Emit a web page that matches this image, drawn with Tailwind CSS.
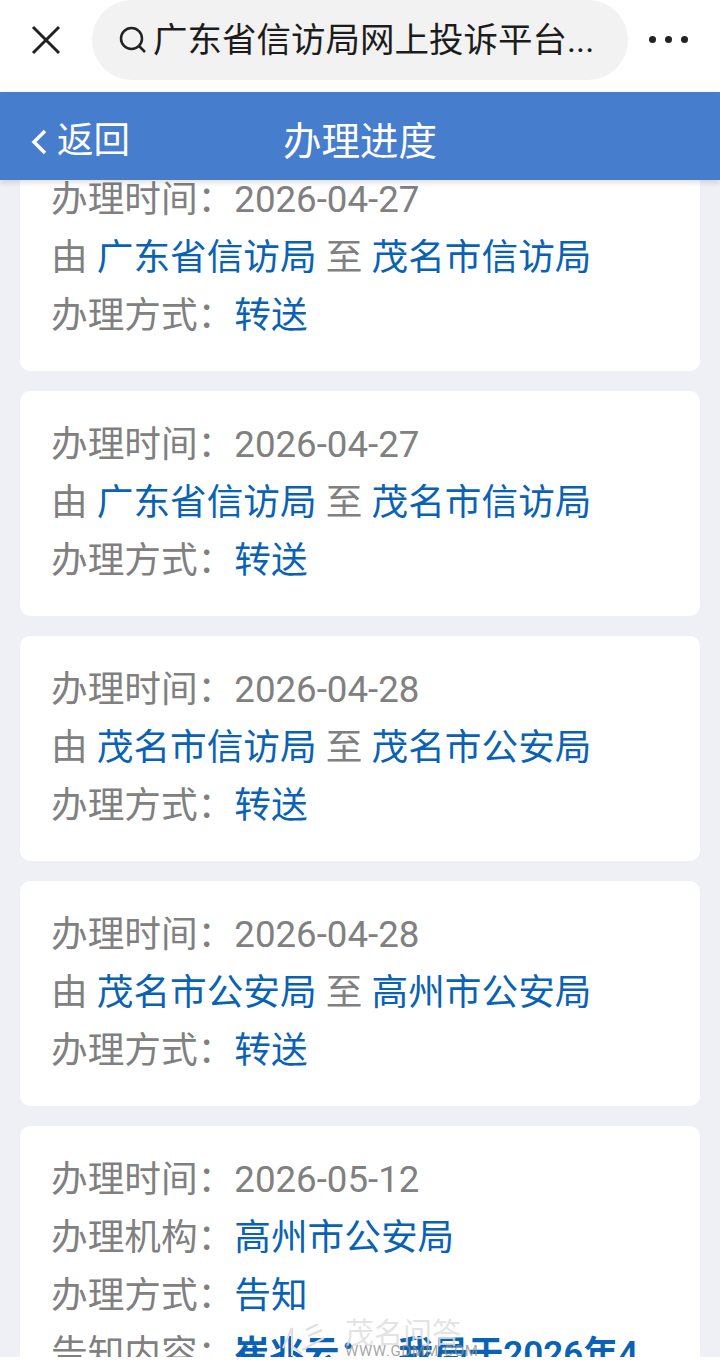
<!DOCTYPE html>
<html lang="zh-CN">
<head>
<meta charset="utf-8">
<script src="https://cdn.jsdelivr.net/npm/@tailwindcss/browser@4"></script>
</head>
<body class="m-0 bg-white">
<div class="relative w-[720px] h-[1364px] overflow-hidden bg-[#eff0f5] font-['Roboto','Noto_Sans_CJK_SC',sans-serif]">
  <header class="relative z-20 h-[92px] bg-white flex items-center">
    <div class="w-[92px] flex justify-center shrink-0 -mt-[12px]">
      <svg width="30" height="30" viewBox="0 0 30 30" class="text-[#222]"><path d="M2 2 L28 28 M28 2 L2 28" stroke="currentColor" stroke-width="3" fill="none"/></svg>
    </div>
    <div class="w-[536px] h-[80px] -mt-[12px] rounded-[40px] bg-[#f2f2f2] flex items-center pl-[26px]">
      <svg width="30" height="30" viewBox="0 0 30 30" class="shrink-0 text-[#222]"><circle cx="13.5" cy="13.5" r="10.5" stroke="currentColor" stroke-width="2.5" fill="none"/><path d="M21 21 L27 27" stroke="currentColor" stroke-width="2.5" fill="none"/></svg>
      <span class="ml-[5px] text-[34.5px] leading-[44px] text-[#1c1c1c] whitespace-nowrap">广东省信访局网上投诉平台...</span>
    </div>
    <div class="flex gap-[9px] -mt-[13px] ml-[21px]">
      <span class="w-[7px] h-[7px] rounded-full bg-[#222]"></span>
      <span class="w-[7px] h-[7px] rounded-full bg-[#222]"></span>
      <span class="w-[7px] h-[7px] rounded-full bg-[#222]"></span>
    </div>
  </header>
  <nav class="relative z-20 h-[88px] bg-[#477dcd] shadow-[0_2px_6px_rgba(0,0,0,0.15)] flex items-center justify-center text-white">
    <div class="absolute left-[31px] top-[25px] flex items-center">
      <svg width="16" height="28" viewBox="0 0 16 28" class="mt-[6px]"><path d="M14 3 L3 14 L14 25" stroke="white" stroke-width="3.5" fill="none"/></svg>
      <span class="ml-[10px] mt-[4px] text-[36.5px] leading-[40px]">返回</span>
    </div>
    <span class="text-[38.5px] leading-[50px] mt-[12px]">办理进度</span>
  </nav>
  <main class="px-[20px] flex flex-col gap-[20px] -mt-[25px] relative z-10 h-[1202px] overflow-hidden text-[36.67px] leading-[58px] text-[#808080]">
    <section class="shrink-0 bg-white rounded-[10px] h-[216px] pt-[16px] pl-[31px]">
      <div>办理时间：<span>2026-04-27</span></div><div>由 <span class="text-[#0a62b5]">广东省信访局</span> 至 <span class="text-[#0a62b5]">茂名市信访局</span></div><div>办理方式：<span class="text-[#0a62b5]">转送</span></div>
    </section>
    <section class="shrink-0 bg-white rounded-[10px] h-[225px] pt-[25px] pl-[31px]">
      <div>办理时间：<span>2026-04-27</span></div><div>由 <span class="text-[#0a62b5]">广东省信访局</span> 至 <span class="text-[#0a62b5]">茂名市信访局</span></div><div>办理方式：<span class="text-[#0a62b5]">转送</span></div>
    </section>
    <section class="shrink-0 bg-white rounded-[10px] h-[225px] pt-[25px] pl-[31px]">
      <div>办理时间：<span>2026-04-28</span></div><div>由 <span class="text-[#0a62b5]">茂名市信访局</span> 至 <span class="text-[#0a62b5]">茂名市公安局</span></div><div>办理方式：<span class="text-[#0a62b5]">转送</span></div>
    </section>
    <section class="shrink-0 bg-white rounded-[10px] h-[225px] pt-[25px] pl-[31px]">
      <div>办理时间：<span>2026-04-28</span></div><div>由 <span class="text-[#0a62b5]">茂名市公安局</span> 至 <span class="text-[#0a62b5]">高州市公安局</span></div><div>办理方式：<span class="text-[#0a62b5]">转送</span></div>
    </section>
    <section class="shrink-0 bg-white rounded-[10px] h-[300px] pt-[25px] pl-[31px]">
      <div>办理时间：<span>2026-05-12</span></div><div>办理机构：<span class="text-[#0a62b5]">高州市公安局</span></div><div>办理方式：<span class="text-[#0a62b5]">告知</span></div><div class="whitespace-nowrap">告知内容：<span class="text-[#0a62b5] font-semibold text-[35px]">崔兆云：<span class="ml-[24px]">我局于2026年4</span></span></div>
    </section>
  </main>
  <div class="absolute z-30 left-0 right-0 top-[1357px] h-[7px] bg-white"></div>
  <svg class="absolute z-30 left-[278px] top-[1324px]" width="50" height="33" viewBox="0 0 50 33"><path d="M5 24 L14 4 L14 32 M14 22 L24 30 M28 6 L40 0 M30 12 L44 6 M24 26 L46 14" stroke="#dedede" stroke-width="2" fill="none"/></svg>
  <div class="absolute z-30 left-[345px] top-[1319px] text-[29px] leading-[30px] text-[#dedede]/85 whitespace-nowrap">茂名问答</div>
  <div class="absolute z-30 left-[345px] top-[1345px] text-[15px] leading-[12px] text-[#8f8f8f]/80 whitespace-nowrap tracking-[0.6px]">WWW.GDMM.COM</div>
</div>
</body>
</html>
